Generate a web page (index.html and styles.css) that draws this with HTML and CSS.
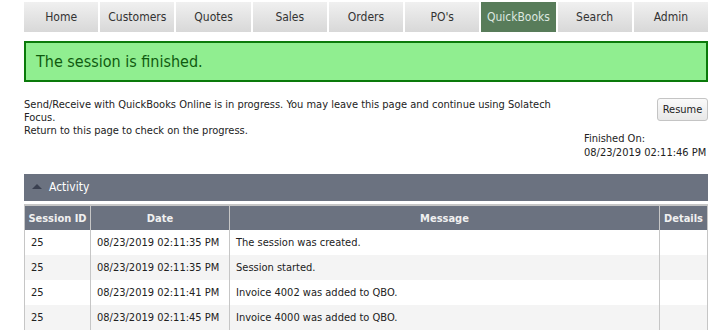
FILE: index.html
```html
<!DOCTYPE html>
<html lang="en">
<head>
    <meta charset="UTF-8">
    <title>QuickBooks Sync</title>
    <link rel="stylesheet" href="styles.css">
</head>
<body>
    <div class="page">
        <nav class="tabs">
            <a class="tab">Home</a>
            <a class="tab">Customers</a>
            <a class="tab">Quotes</a>
            <a class="tab">Sales</a>
            <a class="tab">Orders</a>
            <a class="tab">PO's</a>
            <a class="tab active">QuickBooks</a>
            <a class="tab">Search</a>
            <a class="tab">Admin</a>
        </nav>

        <div class="status">The session is finished.</div>

        <div class="info">
            <p class="info-text">Send/Receive with QuickBooks Online is in progress. You may leave this page and continue using Solatech Focus.<br>Return to this page to check on the progress.</p>
            <div class="info-side">
                <button type="button" class="resume">Resume</button>
                <div class="finished">Finished On:<br>08/23/2019 02:11:46 PM</div>
            </div>
        </div>

        <div class="panel-head"><span class="caret"></span>Activity</div>
        <table class="activity">
            <thead>
                <tr>
                    <th class="col-id">Session ID</th>
                    <th class="col-date">Date</th>
                    <th>Message</th>
                    <th class="col-details">Details</th>
                </tr>
            </thead>
            <tbody>
                <tr><td>25</td><td>08/23/2019 02:11:35 PM</td><td>The session was created.</td><td></td></tr>
                <tr><td>25</td><td>08/23/2019 02:11:35 PM</td><td>Session started.</td><td></td></tr>
                <tr><td>25</td><td>08/23/2019 02:11:41 PM</td><td>Invoice 4002 was added to QBO.</td><td></td></tr>
                <tr><td>25</td><td>08/23/2019 02:11:45 PM</td><td>Invoice 4000 was added to QBO.</td><td></td></tr>
            </tbody>
        </table>
    </div>
</body>
</html>
```

FILE: styles.css
```css
body {
    margin: 0;
    font-family: "DejaVu Sans Condensed", "DejaVu Sans", sans-serif;
    font-size: 11px;
    color: #222;
    background-color: white;
}
.page {
    width: 684px;
    margin-left: 24px;
    padding-top: 2px;
}
.tabs {
    display: flex;
    gap: 2px;
}
.tab {
    flex: 1;
    height: 30px;
    line-height: 30px;
    text-align: center;
    font-size: 12px;
    color: #333;
    background: linear-gradient(#f0f0f0, #d8d8d8);
}
.tab.active {
    background: #587c5a;
    color: #dde8e0;
}
.status {
    margin-top: 9px;
    height: 37px;
    line-height: 37px;
    padding-left: 10px;
    border: 2px solid #0a7a0a;
    background-color: #90ee90;
    color: #0f5a0f;
    font-size: 16px;
}
.info {
    display: flex;
    justify-content: space-between;
    margin-top: 16px;
}
.info-text {
    margin: 0;
    width: 540px;
    line-height: 13px;
}
.info-side {
    display: flex;
    flex-direction: column;
    align-items: flex-end;
}
.resume {
    font-family: inherit;
    font-size: 11px;
    color: #222;
    width: 51px;
    height: 23px;
    padding: 0;
    border: 1px solid #c4c4c4;
    border-radius: 3px;
    background: linear-gradient(#fafafa, #e8e8e8);
}
.finished {
    margin-top: 11px;
    width: 124px;
    line-height: 14px;
}
.panel-head {
    margin-top: 14px;
    height: 27px;
    line-height: 27px;
    padding-left: 8px;
    background-color: #6b7280;
    color: white;
    font-size: 12px;
}
.caret {
    display: inline-block;
    width: 0;
    height: 0;
    margin-right: 7px;
    vertical-align: 2px;
    border-left: 5px solid transparent;
    border-right: 5px solid transparent;
    border-bottom: 5px solid #3a4050;
}
.activity {
    width: 100%;
    margin-top: 3px;
    border-collapse: collapse;
    table-layout: fixed;
}
.activity th, .activity td {
    border: 1px solid #c6c6c6;
    border-top: none;
    border-bottom: none;
    padding: 0 6px;
    text-align: left;
    white-space: nowrap;
    overflow: hidden;
}
.activity th {
    padding: 0 3px;
    height: 24px;
    background-color: #6b7280;
    color: #f0f0f0;
    font-weight: bold;
    text-align: center;
    border-top: 2px solid #c6c6c6;
}
.activity td {
    height: 25px;
}
.activity tbody tr:nth-child(even) {
    background-color: #f4f4f4;
}
.col-id {
    width: 59px;
}
.col-date {
    width: 132px;
}
.col-details {
    width: 41px;
}
```
